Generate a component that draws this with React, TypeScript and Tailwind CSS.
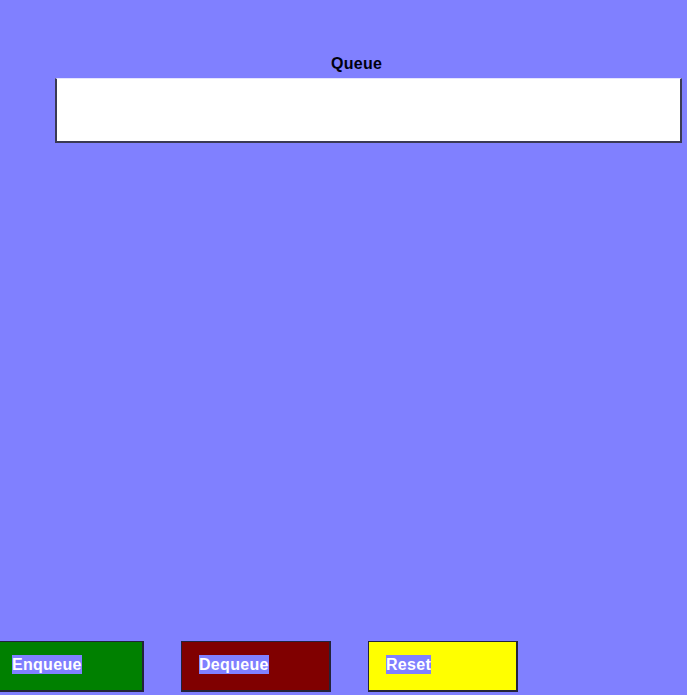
const App = () => {
  const buttons = [
    { label: "Enqueue", bg: "bg-[#008000]" },
    { label: "Dequeue", bg: "bg-[#800000]" },
    { label: "Reset", bg: "bg-[#ffff00]" },
  ];

  return (
    <div
      className="flex h-[695px] w-full flex-col overflow-hidden bg-[#8080ff]"
      style={{ fontFamily: '"Liberation Sans", Arial, sans-serif' }}
    >
      <div className="pl-[331px] pt-[54px] text-[16px] font-bold leading-[20px] tracking-[0.3px] text-[#000010]">
        Queue
      </div>
      <div className="ml-[55px] mt-[4px] h-[65px] w-[627px] border-t border-r-2 border-b-2 border-l-2 border-t-[#e4e4ff] border-r-[#3a3a55] border-b-[#3a3a55] border-l-[#3a3a55] bg-white" />

      <div className="mt-auto mb-[3px] ml-[-6px] flex gap-[37px]">
        {buttons.map((b) => (
          <button
            key={b.label}
            className={`flex h-[51px] w-[150px] items-center border border-r-2 border-b-2 border-[#23233a] pb-[4px] pl-[17px] ${b.bg}`}
          >
            <span className="bg-[#8080ff] text-[16px] font-bold leading-[19px] tracking-[0.3px] text-white">
              {b.label}
            </span>
          </button>
        ))}
      </div>
    </div>
  );
};

export default App;
